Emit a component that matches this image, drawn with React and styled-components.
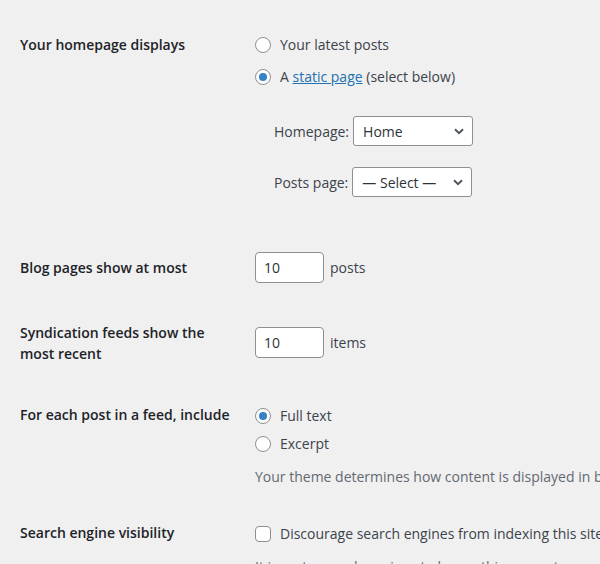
import React from "react";
import styled, { createGlobalStyle } from "styled-components";

const Global = createGlobalStyle`
  html, body { margin: 0; padding: 0; background: #f0f0f1; }
  body {
    font-family: "Open Sans", "Noto Sans", sans-serif;
    font-size: 14px;
    color: #3c434a;
    overflow: hidden;
  }
`;

const Page = styled.div`
  width: 600px;
  height: 564px;
  overflow: hidden;
  padding-left: 20px;
  box-sizing: border-box;
`;

const Row = styled.div`
  display: grid;
  grid-template-columns: 235px max-content;
  align-items: start;
  margin-top: ${(p) => p.$top}px;
`;

const Label = styled.div`
  font-weight: 600;
  color: #1d2327;
  line-height: ${(p) => p.$lh || 20}px;
  padding-top: ${(p) => p.$pad || 0}px;
  white-space: nowrap;
`;

const Field = styled.div`
  display: flex;
  flex-direction: column;
  align-items: flex-start;
  padding-top: ${(p) => p.$pad || 0}px;
  white-space: nowrap;
`;

const Choice = styled.label`
  display: flex;
  align-items: center;
  gap: 9px;
  height: 20px;
  line-height: 20px;
  margin-top: ${(p) => p.$top || 0}px;
  color: #3c434a;
`;

const Radio = styled.input.attrs({ type: "radio" })`
  appearance: none;
  margin: 0;
  width: 16px;
  height: 16px;
  border: 1px solid #8c8f94;
  border-radius: 50%;
  background: #fff;
  box-sizing: border-box;
  display: grid;
  place-items: center;
  flex: none;
  &:checked::before {
    content: "";
    width: 8px;
    height: 8px;
    border-radius: 50%;
    background: #3582c4;
  }
`;

const Checkbox = styled.input.attrs({ type: "checkbox" })`
  appearance: none;
  margin: 0;
  width: 16px;
  height: 16px;
  border: 1px solid #8c8f94;
  border-radius: 4px;
  background: #fff;
  box-sizing: border-box;
  flex: none;
`;

const Link = styled.a`
  color: #2271b1;
  text-decoration: underline;
`;

const SubList = styled.div`
  display: flex;
  flex-direction: column;
  gap: 21px;
  margin-top: 29px;
  padding-left: 19px;
`;

const SubItem = styled.label`
  display: flex;
  align-items: center;
  gap: 4px;
  color: #3c434a;
`;

const SelectWrap = styled.span`
  position: relative;
  display: inline-block;
  width: ${(p) => p.$w}px;
  height: 30px;
`;

const Select = styled.select`
  appearance: none;
  width: 100%;
  height: 100%;
  box-sizing: border-box;
  border: 1px solid #8c8f94;
  border-radius: 3px;
  background: #fff;
  color: #2c3338;
  font: inherit;
  font-size: 14px;
  padding: 0 24px 0 9px;
  margin: 0;
`;

const Chevron = styled.svg`
  position: absolute;
  right: 9px;
  top: 12px;
  width: 10px;
  height: 7px;
  pointer-events: none;
`;

const NumberLine = styled.div`
  display: flex;
  align-items: center;
  gap: 6px;
`;

const NumberInput = styled.input`
  width: 69px;
  height: 31px;
  box-sizing: border-box;
  border: 1px solid #8c8f94;
  border-radius: 4px;
  background: #fff;
  color: #2c3338;
  font: inherit;
  font-size: 14px;
  padding: 0 8px;
  margin: 0;
`;

const Description = styled.p`
  margin: ${(p) => p.$top}px 0 0;
  line-height: 20px;
  color: #646970;
`;

function SelectBox({ width, value, options }) {
  return (
    <SelectWrap $w={width}>
      <Select defaultValue={value}>
        {options.map((o) => (
          <option key={o}>{o}</option>
        ))}
      </Select>
      <Chevron viewBox="0 0 10 7">
        <path d="M1 1.2 L5 5.2 L9 1.2" fill="none" stroke="#50575e" strokeWidth="2" />
      </Chevron>
    </SelectWrap>
  );
}

export default function App() {
  return (
    <Page>
      <Global />
      <Row $top={35}>
        <Label>Your homepage displays</Label>
        <Field>
          <Choice>
            <Radio name="front" />
            Your latest posts
          </Choice>
          <Choice $top={12}>
            <Radio name="front" defaultChecked />
            <span>
              A <Link href="#">static page</Link> (select below)
            </span>
          </Choice>
          <SubList>
            <SubItem>
              Homepage:
              <SelectBox width={120} value="Home" options={["Home"]} />
            </SubItem>
            <SubItem>
              Posts page:
              <SelectBox width={120} value="— Select —" options={["— Select —"]} />
            </SubItem>
          </SubList>
        </Field>
      </Row>

      <Row $top={55}>
        <Label $pad={6}>Blog pages show at most</Label>
        <Field>
          <NumberLine>
            <NumberInput type="number" defaultValue="10" />
            posts
          </NumberLine>
        </Field>
      </Row>

      <Row $top={39}>
        <Label $lh={21}>
          Syndication feeds show the
          <br />
          most recent
        </Label>
        <Field $pad={5}>
          <NumberLine>
            <NumberInput type="number" defaultValue="10" />
            items
          </NumberLine>
        </Field>
      </Row>

      <Row $top={41}>
        <Label>For each post in a feed, include</Label>
        <Field $pad={1}>
          <Choice>
            <Radio name="feed" defaultChecked />
            Full text
          </Choice>
          <Choice $top={8}>
            <Radio name="feed" />
            Excerpt
          </Choice>
          <Description $top={13}>
            Your theme determines how content is displayed in browsers. Learn more about feeds.
          </Description>
        </Field>
      </Row>

      <Row $top={36}>
        <Label>Search engine visibility</Label>
        <Field $pad={1}>
          <Choice>
            <Checkbox />
            Discourage search engines from indexing this site
          </Choice>
          <Description $top={13}>It is up to search engines to honor this request.</Description>
        </Field>
      </Row>
    </Page>
  );
}
